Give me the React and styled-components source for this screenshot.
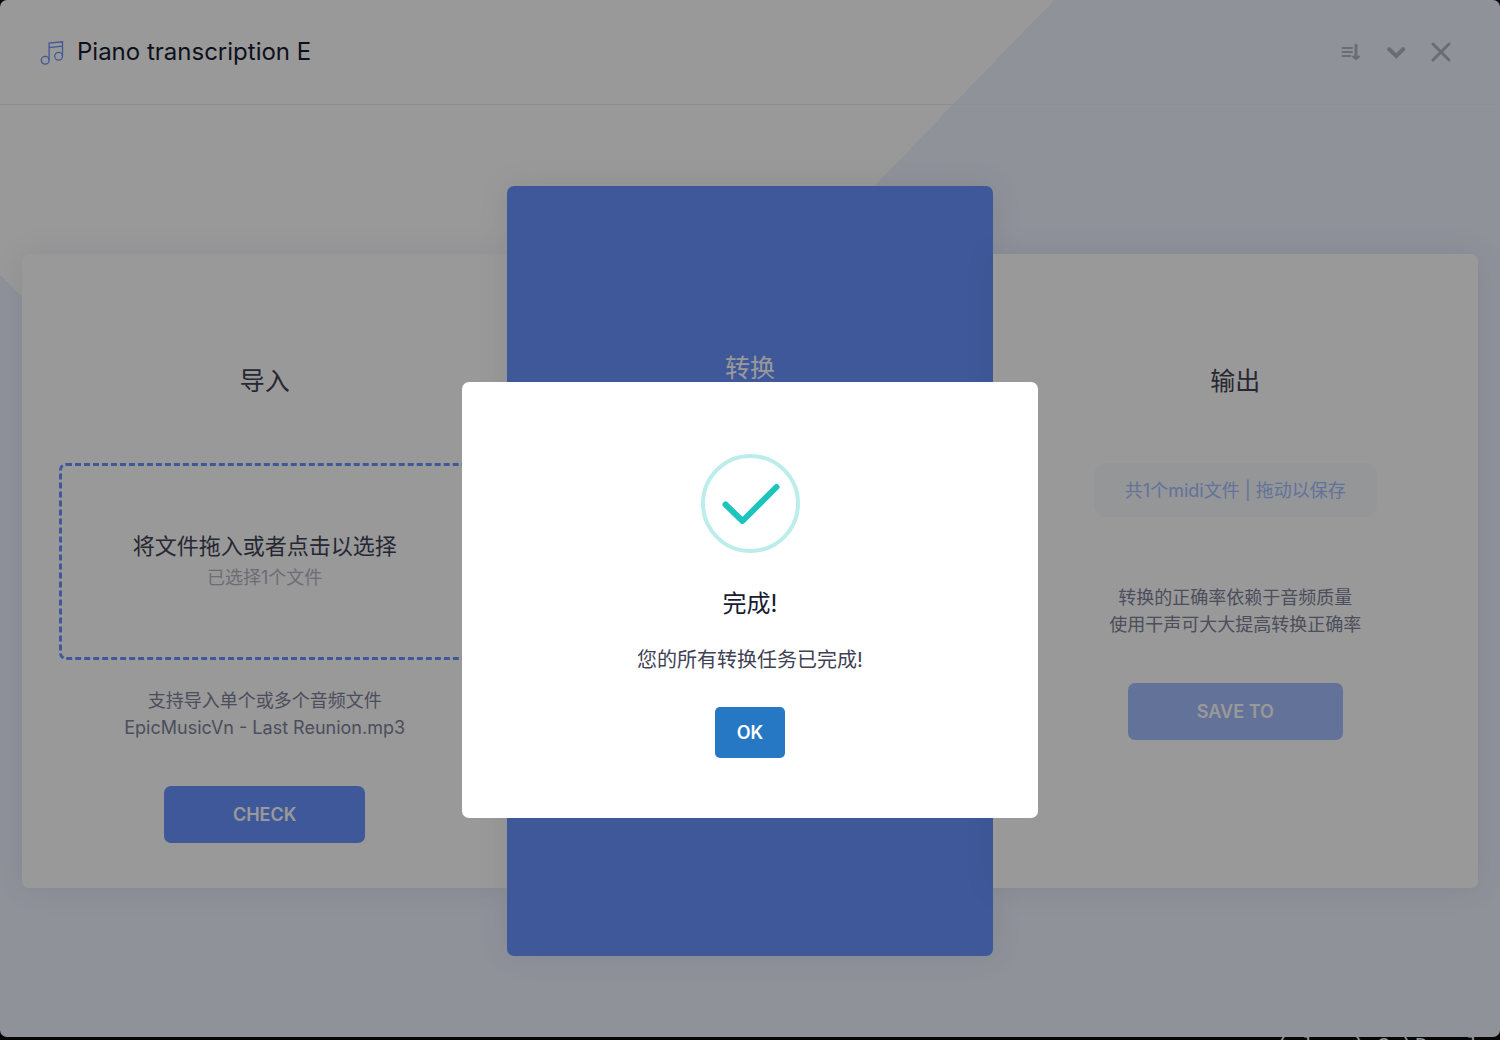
import React, { useState } from "react";
import styled, { createGlobalStyle } from "styled-components";

const GlobalStyle = createGlobalStyle`
  *, *::before, *::after { box-sizing: border-box; }
  body {
    margin: 0;
    background: #0c0a0c;
    font-family: Inter, "Noto Sans CJK SC", sans-serif;
    font-size: 18px;
    line-height: 27px;
    color: #3f4254;
  }
  h1, h2, p { margin: 0; font-weight: 400; }
  button { font-family: inherit; cursor: pointer; }
`;

const Desktop = styled.div`
  display: flex;
  flex-direction: column;
  min-height: 100vh;
`;

const Window = styled.div`
  flex: 1;
  display: flex;
  flex-direction: column;
  border-radius: 7px;
  background: conic-gradient(from -46deg at 27.2% 64.5%, #ffffff 90deg, #eef3ff 0);
`;

const Header = styled.header`
  display: flex;
  align-items: center;
  justify-content: space-between;
  height: 105px;
  padding: 0 43px 0 40px;
  border-bottom: 1px solid #ebedf3;
`;

const Brand = styled.div`
  display: flex;
  align-items: center;
  gap: 12px;
`;

const AppTitle = styled.h1`
  font-size: 24px;
  line-height: 36px;
  color: #181c32;
`;

const WindowActions = styled.div`
  display: flex;
  gap: 13px;
`;

const IconButton = styled.button`
  display: grid;
  place-items: center;
  width: 32px;
  height: 32px;
  padding: 0;
  border: 0;
  background: none;
  color: #b5b5c3;
`;

const Main = styled.main`
  flex: 1;
  display: grid;
  grid-template-columns: repeat(3, minmax(0, 1fr));
  align-content: center;
  padding: 81px 22px;
`;

const Card = styled.section`
  display: flex;
  flex-direction: column;
  align-items: center;
  margin: ${(p) => (p.$featured ? "-68px 0" : "0")};
  padding: ${(p) => (p.$featured ? "163px 37px 45px" : "108px 37px 45px")};
  border-radius: ${(p) => (p.$featured ? "7px" : "0")};
  background: ${(p) => (p.$featured ? "#6993ff" : "#ffffff")};
  color: ${(p) => (p.$featured ? "#ffffff" : "#3f4254")};
  box-shadow: 0 0 30px rgba(56, 71, 109, 0.1);
  text-align: center;

  &:first-child { border-radius: 7px 0 0 7px; }
  &:last-child { border-radius: 0 7px 7px 0; }
`;

const CardTitle = styled.h2`
  font-size: 25px;
  line-height: 38px;
`;

const DropZone = styled.button`
  display: flex;
  flex-direction: column;
  align-items: center;
  justify-content: center;
  align-self: stretch;
  height: 197px;
  margin-top: 63px;
  padding: 0 0 5px;
  border: 3px dashed #6993ff;
  border-radius: 7px;
  background: none;
`;

const DropTitle = styled.span`
  font-size: 22px;
  line-height: 36px;
  color: #3f4254;
`;

const DropHint = styled.span`
  font-size: 18px;
  line-height: 27px;
  color: #b5b5c3;
`;

const Chip = styled.button`
  height: 54px;
  margin-top: 63px;
  padding: 0 31px;
  border: 0;
  border-radius: 12px;
  background: #f7fafd;
  font-size: 18px;
  line-height: 27px;
  color: #a5beff;
`;

const Note = styled.p`
  margin-top: ${(p) => (p.$spacious ? "67px" : "27px")};
  color: #7e8299;
`;

const ActionButton = styled.button`
  height: 57px;
  margin-top: 45px;
  padding: 0 69px;
  border: 0;
  border-radius: 7px;
  background: ${(p) => (p.$soft ? "#a5beff" : "#6993ff")};
  font-size: 18px;
  line-height: 27px;
  font-weight: 600;
  color: #ffffff;
`;

const Taskbar = styled.div`
  display: flex;
  justify-content: flex-end;
  height: 3px;
  padding-right: 22px;
  overflow: hidden;
  background: #0c0a0c;
`;

const TaskbarText = styled.span`
  font-family: "Liberation Mono", monospace;
  font-size: 21px;
  line-height: 18px;
  white-space: pre;
  color: #ffffff;
`;

const Overlay = styled.div`
  position: fixed;
  inset: 0;
  display: grid;
  place-items: center;
  padding-top: 160px;
  background: rgba(0, 0, 0, 0.4);
`;

const Dialog = styled.div`
  display: flex;
  flex-direction: column;
  align-items: center;
  width: 576px;
  max-width: 100%;
  padding: 72px 36px 60px;
  border-radius: 7px;
  background: #ffffff;
  text-align: center;
`;

const SuccessMark = styled.svg`
  width: 99px;
  height: 99px;
`;

const DialogTitle = styled.h2`
  margin-top: 33px;
  font-size: 24px;
  line-height: 36px;
  color: #181c32;
`;

const DialogText = styled.p`
  margin-top: 23px;
  font-size: 20px;
  line-height: 30px;
  color: #3f4254;
`;

const ConfirmButton = styled.button`
  height: 51px;
  margin-top: 32px;
  padding: 0 22px;
  border: 0;
  border-radius: 5px;
  background: #2778c4;
  font-size: 18px;
  line-height: 27px;
  font-weight: 600;
  color: #ffffff;
`;

const MusicIcon = () => (
  <svg width="25" height="26" viewBox="0 0 25 26" fill="none" stroke="#6993ff" strokeWidth="1.3" aria-hidden="true">
    <circle cx="5.2" cy="21.2" r="3.9" />
    <circle cx="18.6" cy="17.2" r="3.9" />
    <path d="M9.1 21.2V4L22.5 2.8V17.2M9.1 8.6L22.5 7.2" />
  </svg>
);

const SortIcon = () => (
  <svg width="20" height="20" viewBox="0 0 20 20" fill="none" stroke="currentColor" strokeWidth="2" strokeLinecap="round" aria-hidden="true">
    <path d="M1.5 6H11M1.5 10H11M1.5 14H9.5" />
    <path d="M15 3.2V14" strokeWidth="3" />
    <path d="M11.5 14.5H18.5L15 17.5Z" fill="currentColor" strokeWidth="1.6" strokeLinejoin="round" />
  </svg>
);

const ChevronIcon = () => (
  <svg width="20" height="20" viewBox="0 0 20 20" fill="none" stroke="currentColor" strokeWidth="4" strokeLinecap="round" aria-hidden="true">
    <path d="M3.2 7.2L10.2 14L17.2 7.2" />
  </svg>
);

const CloseIcon = () => (
  <svg width="20" height="20" viewBox="0 0 20 20" fill="none" stroke="currentColor" strokeWidth="3" strokeLinecap="round" aria-hidden="true">
    <path d="M2 2L18 18M18 2L2 18" />
  </svg>
);

export default function App() {
  const [open, setOpen] = useState(true);
  return (
    <>
      <GlobalStyle />
      <Desktop>
        <Window>
          <Header>
            <Brand>
              <MusicIcon />
              <AppTitle>Piano transcription E</AppTitle>
            </Brand>
            <WindowActions>
              <IconButton type="button" aria-label="Menu"><SortIcon /></IconButton>
              <IconButton type="button" aria-label="Minimize"><ChevronIcon /></IconButton>
              <IconButton type="button" aria-label="Close"><CloseIcon /></IconButton>
            </WindowActions>
          </Header>
          <Main>
            <Card>
              <CardTitle>导入</CardTitle>
              <DropZone type="button">
                <DropTitle>将文件拖入或者点击以选择</DropTitle>
                <DropHint>已选择1个文件</DropHint>
              </DropZone>
              <Note>
                支持导入单个或多个音频文件
                <br />
                EpicMusicVn - Last Reunion.mp3
              </Note>
              <ActionButton type="button">CHECK</ActionButton>
            </Card>
            <Card $featured>
              <CardTitle>转换</CardTitle>
            </Card>
            <Card>
              <CardTitle>输出</CardTitle>
              <Chip type="button">共1个midi文件 | 拖动以保存</Chip>
              <Note $spacious>
                转换的正确率依赖于音频质量
                <br />
                使用干声可大大提高转换正确率
              </Note>
              <ActionButton type="button" $soft>SAVE TO</ActionButton>
            </Card>
          </Main>
        </Window>
        <Taskbar aria-hidden="true">
          <TaskbarText>{"( l   ) C \\D   ]"}</TaskbarText>
        </Taskbar>
      </Desktop>
      {open && (
        <Overlay>
          <Dialog role="dialog" aria-modal="true" aria-labelledby="done-title">
            <SuccessMark viewBox="0 0 99 99" fill="none" aria-hidden="true">
              <circle cx="49.5" cy="49.5" r="47.5" stroke="#bbedea" strokeWidth="4" />
              <path d="M24.5 50.5L41.5 67L75.5 33" stroke="#1bc5bd" strokeWidth="6" strokeLinecap="round" strokeLinejoin="round" />
            </SuccessMark>
            <DialogTitle id="done-title">完成!</DialogTitle>
            <DialogText>您的所有转换任务已完成!</DialogText>
            <ConfirmButton type="button" onClick={() => setOpen(false)}>OK</ConfirmButton>
          </Dialog>
        </Overlay>
      )}
    </>
  );
}
